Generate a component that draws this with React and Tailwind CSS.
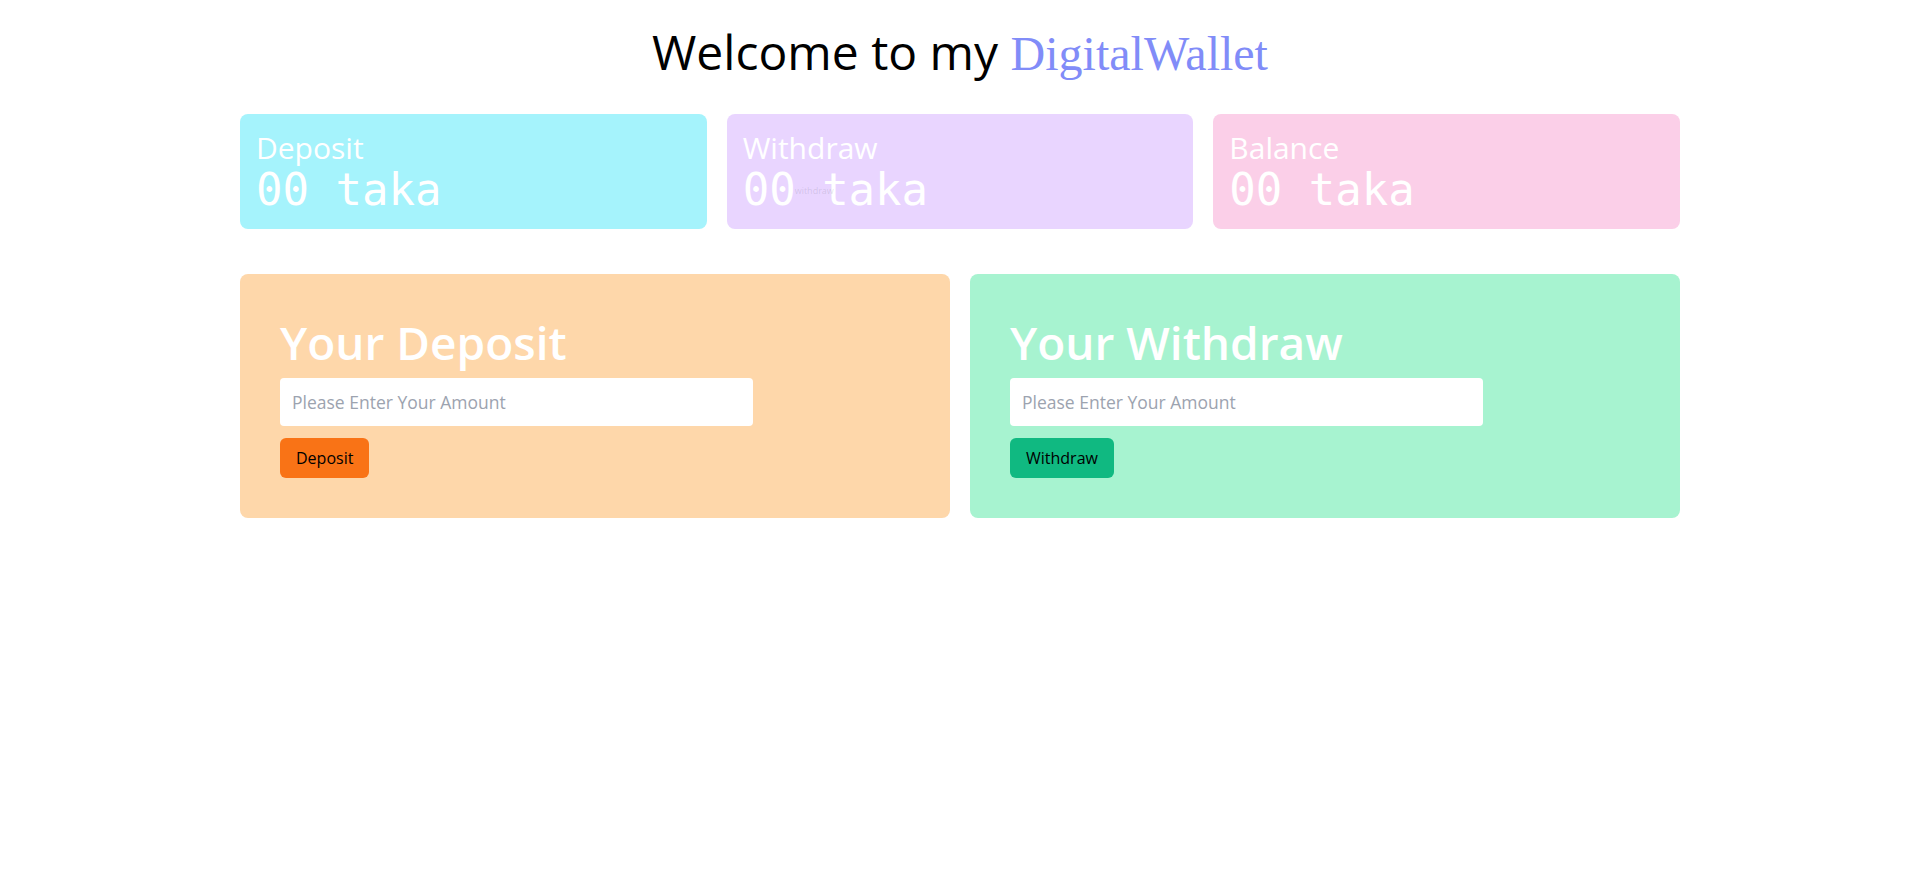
import React from 'react';

const stats = [
    { label: 'Deposit', bg: 'bg-[#a5f3fc]' },
    { label: 'Withdraw', bg: 'bg-[#e9d5ff]', ghost: true },
    { label: 'Balance', bg: 'bg-[#fbcfe8]' },
];

const StatCard = ({ label, bg, ghost }) => (
    <div className={`${bg} rounded-lg px-4 pt-4 pb-[15px] text-white`}>
        <p className="text-[30px] leading-[36px]">{label}</p>
        <p className="relative text-[44px] leading-[48px] font-['DejaVu_Sans_Mono',monospace]">
            00 taka
            {ghost && (
                <span className="absolute left-[52px] top-[20px] text-[9px] leading-none text-gray-500/20 font-['Open_Sans',sans-serif]">
                    withdraw
                </span>
            )}
        </p>
    </div>
);

const ActionCard = ({ title, bg, btn, btnBg }) => (
    <div className={`${bg} rounded-lg p-10`}>
        <h2 className="text-[46px] leading-[56px] font-semibold text-white mb-2">{title}</h2>
        <input
            type="text"
            placeholder="Please Enter Your Amount"
            className="w-3/4 h-12 bg-white rounded-sm px-3 text-[17.5px] placeholder:text-[#9ca3af] outline-none"
        />
        <div className="mt-3">
            <button className={`${btnBg} h-10 px-4 rounded-md text-base text-black`}>{btn}</button>
        </div>
    </div>
);

export default function App() {
    return (
        <div className="min-h-screen bg-white font-['Open_Sans',sans-serif] pt-[28px]">
            <h1 className="text-center text-[48px] leading-[48px] text-black">
                Welcome to my{' '}
                <span className="text-[#818cf8] font-['Liberation_Serif',serif]">DigitalWallet</span>
            </h1>

            <div className="w-[1440px] mx-auto mt-9">
                {/* top stats */}
                <div className="grid grid-cols-3 gap-5">
                    {stats.map((s) => (
                        <StatCard key={s.label} {...s} />
                    ))}
                </div>

                {/* deposit / withdraw forms */}
                <div className="grid grid-cols-2 gap-5 mt-[45px]">
                    <ActionCard title="Your Deposit" bg="bg-[#fed7aa]" btn="Deposit" btnBg="bg-[#f97316]" />
                    <ActionCard title="Your Withdraw" bg="bg-[#a7f3d0]" btn="Withdraw" btnBg="bg-[#10b981]" />
                </div>
            </div>
        </div>
    );
}
